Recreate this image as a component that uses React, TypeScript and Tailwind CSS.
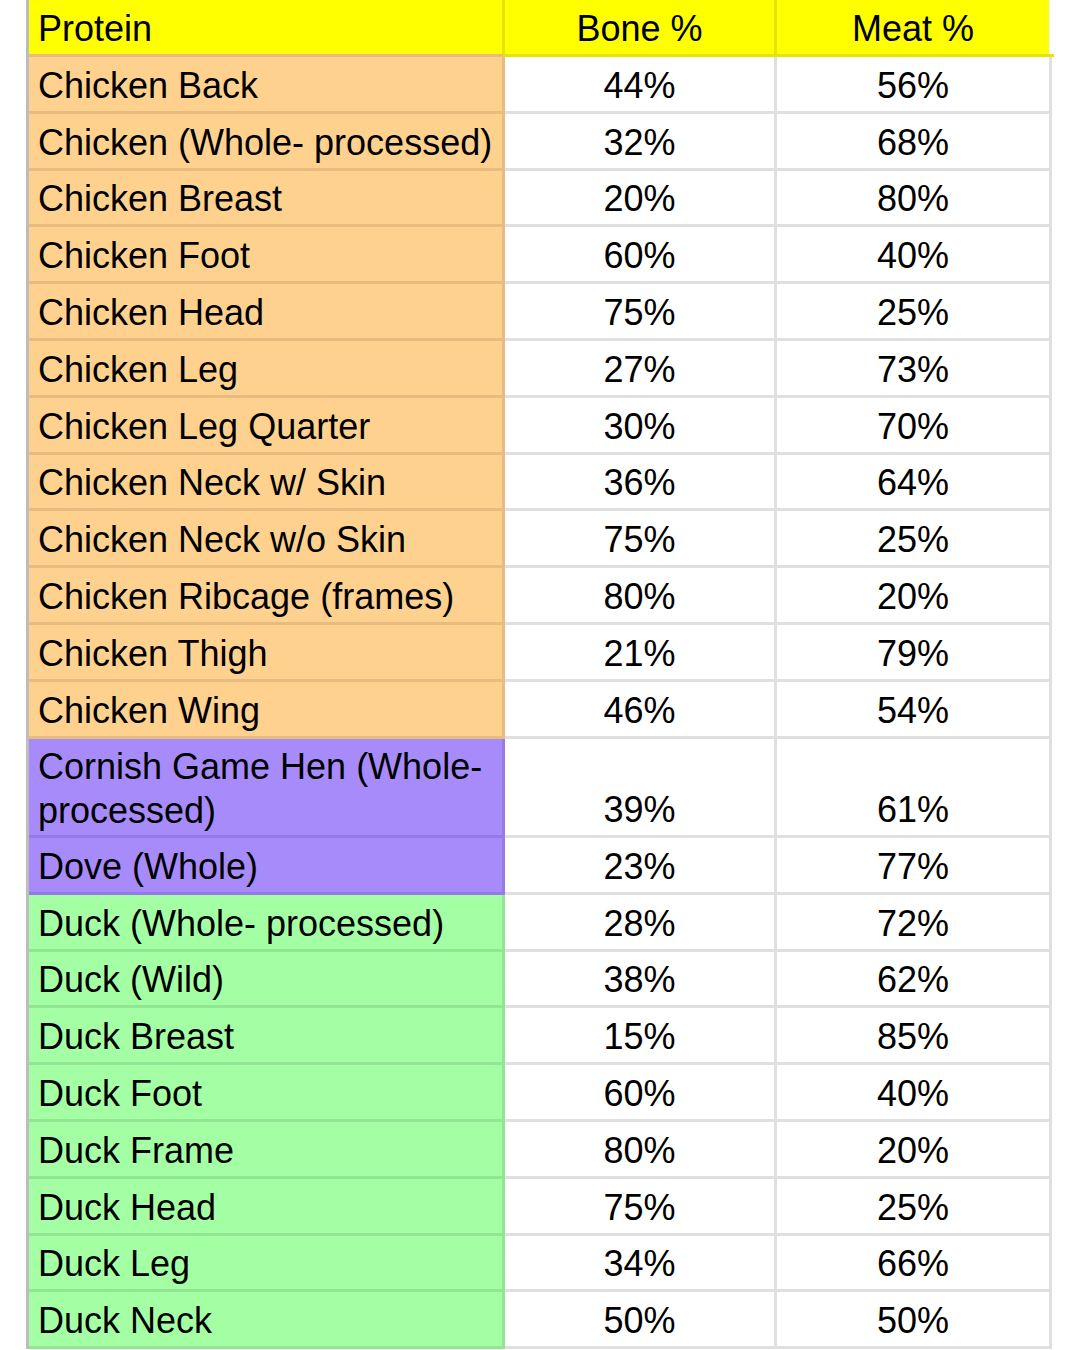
const rows: { name: string; bone: string; meat: string; group: 'chicken' | 'hen' | 'duck'; tall?: boolean }[] = [
  { name: 'Chicken Back', bone: '44%', meat: '56%', group: 'chicken' },
  { name: 'Chicken (Whole- processed)', bone: '32%', meat: '68%', group: 'chicken' },
  { name: 'Chicken Breast', bone: '20%', meat: '80%', group: 'chicken' },
  { name: 'Chicken Foot', bone: '60%', meat: '40%', group: 'chicken' },
  { name: 'Chicken Head', bone: '75%', meat: '25%', group: 'chicken' },
  { name: 'Chicken Leg', bone: '27%', meat: '73%', group: 'chicken' },
  { name: 'Chicken Leg Quarter', bone: '30%', meat: '70%', group: 'chicken' },
  { name: 'Chicken Neck w/ Skin', bone: '36%', meat: '64%', group: 'chicken' },
  { name: 'Chicken Neck w/o Skin', bone: '75%', meat: '25%', group: 'chicken' },
  { name: 'Chicken Ribcage (frames)', bone: '80%', meat: '20%', group: 'chicken' },
  { name: 'Chicken Thigh', bone: '21%', meat: '79%', group: 'chicken' },
  { name: 'Chicken Wing', bone: '46%', meat: '54%', group: 'chicken' },
  { name: 'Cornish Game Hen (Whole- processed)', bone: '39%', meat: '61%', group: 'hen', tall: true },
  { name: 'Dove (Whole)', bone: '23%', meat: '77%', group: 'hen' },
  { name: 'Duck (Whole- processed)', bone: '28%', meat: '72%', group: 'duck' },
  { name: 'Duck (Wild)', bone: '38%', meat: '62%', group: 'duck' },
  { name: 'Duck Breast', bone: '15%', meat: '85%', group: 'duck' },
  { name: 'Duck Foot', bone: '60%', meat: '40%', group: 'duck' },
  { name: 'Duck Frame', bone: '80%', meat: '20%', group: 'duck' },
  { name: 'Duck Head', bone: '75%', meat: '25%', group: 'duck' },
  { name: 'Duck Leg', bone: '34%', meat: '66%', group: 'duck' },
  { name: 'Duck Neck', bone: '50%', meat: '50%', group: 'duck' },
];

const groupStyles = {
  chicken: 'bg-[#ffd18e] border-[#e8bb7e]',
  hen: 'bg-[#a88bfa] border-[#977ae6]',
  duck: 'bg-[#a4ffa4] border-[#92e592]',
};

export default function App() {
  return (
    <div className="min-h-[1350px] bg-white text-black text-[36px] font-['Liberation_Sans',Arial,sans-serif]">
      <div className="ml-[26px] w-[1028px] border-l-[3px] border-[#bdbdbd]">
        <div className="flex h-[57px]">
          <div className="w-[476px] bg-[#ffff00] border-r-[3px] border-b-[3px] border-r-[#e5e500] border-b-[#e8bb7e] pl-[9px] pt-[4px] flex items-center">
            Protein
          </div>
          <div className="w-[272px] bg-[#ffff00] border-r-[3px] border-b-[3px] border-[#e5e500] pt-[4px] flex items-center justify-center">
            Bone %
          </div>
          <div className="w-[272px] bg-[#ffff00] border-b-[3px] border-[#e5e500] pt-[4px] flex items-center justify-center">
            Meat %
          </div>
          <div className="w-[5px] border-b-[3px] border-[#e5e500]" />
        </div>
        {rows.map((r) => (
          <div key={r.name} className={`flex ${r.tall ? 'h-[99.4px]' : 'h-[56.8px]'}`}>
            <div
              className={`w-[476px] border-r-[3px] border-b-[3px] pl-[9px] pt-[4px] flex items-center leading-[44px] ${groupStyles[r.group]}`}
            >
              {r.tall ? (
                <span>
                  Cornish Game Hen (Whole-
                  <br />
                  processed)
                </span>
              ) : (
                r.name
              )}
            </div>
            <div className="w-[272px] border-r-[3px] border-b-[3px] border-[#e0e0e0] flex items-end justify-center pb-[5px] leading-[40px]">
              {r.bone}
            </div>
            <div className="w-[275px] border-r-[3px] border-b-[3px] border-[#e0e0e0] flex items-end justify-center pb-[5px] leading-[40px]">
              {r.meat}
            </div>
          </div>
        ))}
      </div>
    </div>
  );
}
